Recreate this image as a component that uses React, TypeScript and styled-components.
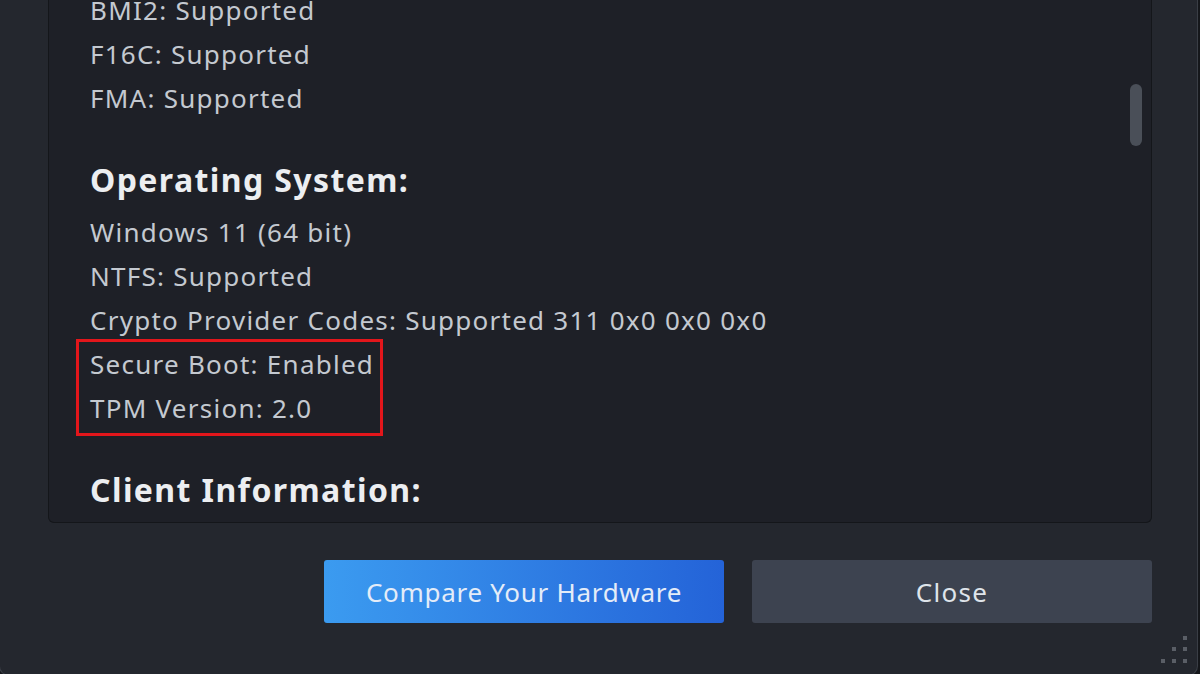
import React from "react";
import styled, { createGlobalStyle } from "styled-components";

const Global = createGlobalStyle`
  html, body { margin: 0; padding: 0; background: #15171b; overflow: hidden; }
  body { font-family: "Noto Sans", "Open Sans", Arial, sans-serif; }
`;

const Window = styled.div`
  box-sizing: border-box;
  width: 1199px;
  height: 676px;
  margin-left: -1px;
  background: #24272e;
  border: 1px solid #3a3e46;
  border-top: none;
  border-radius: 0 0 10px 10px;
  padding: 0 45px 0 48px;
  display: flex;
  flex-direction: column;
`;

const Panel = styled.div`
  position: relative;
  box-sizing: border-box;
  height: 523px;
  background: #1e2027;
  border: 1px solid #14161a;
  border-top: none;
  border-radius: 0 0 6px 6px;
  overflow: hidden;
  padding-left: 41px;
`;

const Content = styled.div`
  margin-top: -12px;
  display: flex;
  flex-direction: column;
`;

const Line = styled.div`
  height: 44px;
  line-height: 44px;
  font-size: 26px;
  letter-spacing: 1.25px;
  color: #c4c9d0;
  white-space: nowrap;
`;

const Heading = styled.div`
  height: 44px;
  line-height: 44px;
  font-size: 32px;
  letter-spacing: 1.4px;
  font-weight: 700;
  color: #eceef1;
  margin-top: 38px;
  margin-bottom: 8px;
  white-space: nowrap;
`;

const Highlight = styled.div`
  position: relative;
  &::after {
    content: "";
    position: absolute;
    left: -14px;
    top: -3px;
    width: 307px;
    bottom: -6px;
    border: 3px solid #e3161b;
    box-sizing: border-box;
    pointer-events: none;
  }
`;

const Thumb = styled.div`
  position: absolute;
  top: 84px;
  right: 9px;
  width: 12px;
  height: 62px;
  border-radius: 6px;
  background: #4a4f58;
`;

const Footer = styled.div`
  position: relative;
  flex: 1;
  display: flex;
  justify-content: flex-end;
  align-items: flex-start;
  gap: 28px;
  padding-top: 37px;
`;

const Button = styled.button<{ $primary?: boolean }>`
  width: 400px;
  height: 63px;
  border: none;
  border-radius: 3px;
  font-family: "Noto Sans", "Open Sans", Arial, sans-serif;
  font-size: 26px;
  letter-spacing: ${(p) => (p.$primary ? "0.7px" : "1.3px")};
  color: ${(p) => (p.$primary ? "#e4ecf8" : "#dfe4ea")};
  background: ${(p) =>
    p.$primary ? "linear-gradient(to right, #3b9bf0, #2463d8)" : "#3d4350"};
  cursor: pointer;
`;

const Grip = styled.svg`
  position: absolute;
  right: -35px;
  bottom: 11px;
`;

export default function App() {
  return (
    <>
      <Global />
      <Window>
        <Panel>
          <Content>
            <Line>BMI2: Supported</Line>
            <Line>F16C: Supported</Line>
            <Line>FMA: Supported</Line>
            <Heading>Operating System:</Heading>
            <Line>Windows 11 (64 bit)</Line>
            <Line>NTFS: Supported</Line>
            <Line>Crypto Provider Codes: Supported 311 0x0 0x0 0x0</Line>
            <Highlight>
              <Line>Secure Boot: Enabled</Line>
              <Line>TPM Version: 2.0</Line>
            </Highlight>
            <Heading>Client Information:</Heading>
          </Content>
          <Thumb />
        </Panel>
        <Footer>
          <Button $primary>Compare Your Hardware</Button>
          <Button>Close</Button>
          <Grip width="26" height="28" viewBox="0 0 26 28">
            <rect x="22" y="0" width="4" height="4" fill="#5a5e66" />
            <rect x="11" y="11" width="4" height="4" fill="#5a5e66" />
            <rect x="22" y="11" width="4" height="4" fill="#5a5e66" />
            <rect x="0" y="23" width="4" height="4" fill="#5a5e66" />
            <rect x="11" y="23" width="4" height="4" fill="#5a5e66" />
            <rect x="22" y="23" width="4" height="4" fill="#5a5e66" />
          </Grip>
        </Footer>
      </Window>
    </>
  );
}
